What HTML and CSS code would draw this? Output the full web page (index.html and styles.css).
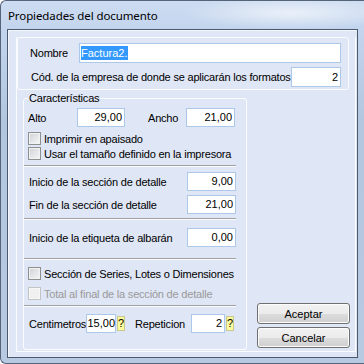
FILE: index.html
```html
<!DOCTYPE html>
<html lang="es">
<head>
    <meta charset="UTF-8">
    <title>Propiedades del documento</title>
    <link rel="stylesheet" href="styles.css">
</head>
<body>
    <div class="window">
        <div class="titlebar">Propiedades del documento</div>
        <div class="client">
            <div class="panel">
                <div class="headbox">
                    <div class="row">
                        <span class="lbl name-lbl">Nombre</span>
                        <span class="field name-field"><span class="sel">Factura2.</span></span>
                    </div>
                    <div class="row row-code">
                        <span class="lbl grow">Cód. de la empresa de donde se aplicarán los formatos</span>
                        <span class="field code-field">2</span>
                    </div>
                </div>
                <div class="lower">
                    <fieldset class="group">
                        <legend>Características</legend>
                        <div class="row row-size">
                            <span class="lbl alto-lbl">Alto</span>
                            <span class="field size-field">29,00</span>
                            <span class="lbl ancho-lbl">Ancho</span>
                            <span class="field size-field ancho">21,00</span>
                        </div>
                        <div class="check first"><span class="box"></span>Imprimir en apaisado</div>
                        <div class="check"><span class="box"></span>Usar el tamaño definido en la impresora</div>
                        <div class="sep"></div>
                        <div class="row detail first-detail">
                            <span class="lbl grow">Inicio de la sección de detalle</span>
                            <span class="field det-field">9,00</span>
                        </div>
                        <div class="row detail fin">
                            <span class="lbl grow">Fin de la sección de detalle</span>
                            <span class="field det-field">21,00</span>
                        </div>
                        <div class="sep"></div>
                        <div class="row detail label-row">
                            <span class="lbl grow">Inicio de la etiqueta de albarán</span>
                            <span class="field det-field">0,00</span>
                        </div>
                        <div class="sep sep-wide"></div>
                        <div class="check series"><span class="box"></span>Sección de Series, Lotes o Dimensiones</div>
                        <div class="check disabled"><span class="box"></span>Total al final de la sección de detalle</div>
                        <div class="sep"></div>
                        <div class="row row-repeat">
                            <span class="lbl cm-lbl">Centimetros</span>
                            <span class="field cm-field">15,00</span>
                            <span class="help">?</span>
                            <span class="lbl rep-lbl">Repeticion</span>
                            <span class="field rep-field">2</span>
                            <span class="help">?</span>
                        </div>
                    </fieldset>
                    <div class="buttons">
                        <button class="btn">Aceptar</button>
                        <button class="btn">Cancelar</button>
                    </div>
                </div>
            </div>
        </div>
    </div>
</body>
</html>
```

FILE: styles.css
```css
body {
    margin: 0;
    font-family: "Liberation Sans", Arial, sans-serif;
    font-size: 11px;
    color: #000;
}

.window {
    width: 364px;
    height: 364px;
    box-sizing: border-box;
    border: 1px solid #56647a;
    border-right: 0;
    border-radius: 6px 0 0 6px;
    background:
        radial-gradient(ellipse 110px 16px at 290px 12px, rgba(255,255,255,0.6), rgba(255,255,255,0) 100%),
        linear-gradient(180deg, #cddcf1 0, #c3d5ee 28px, #b3c6e0 120px, #b8cae2 100%);
    display: flex;
    flex-direction: column;
    overflow: hidden;
}

.titlebar {
    height: 28px;
    padding-left: 7px;
    display: flex;
    align-items: center;
    font-family: "Noto Sans", "Open Sans", sans-serif;
    font-size: 11.5px;
    letter-spacing: -0.1px;
    color: #000;
}

.client {
    margin-left: 6px;
    width: 351px;
    height: 329px;
    box-sizing: border-box;
    border: 1px solid #4b596c;
    background: #dfe6f5;
    box-shadow: inset 1px 1px 0 #f4f7fd;
    display: flex;
    flex-direction: column;
}

.panel {
    margin: 7px 1px 5px 8px;
    flex: 1;
    border: 1px solid #fbfcff;
    border-top: 0;
    display: flex;
    flex-direction: column;
}

.headbox {
    width: 332px;
    height: 53px;
    box-sizing: border-box;
    border: 1px solid #fbfcff;
    border-radius: 3px;
    padding: 5px 7px 0 12px;
}

.row {
    display: flex;
    align-items: center;
}

.lbl {
    white-space: nowrap;
    letter-spacing: -0.2px;
}

.grow {
    flex: 1;
}

.field {
    height: 19px;
    box-sizing: border-box;
    background: #fff;
    border: 1px solid #abc7e9;
    line-height: 17px;
    text-align: right;
    padding-right: 2px;
    white-space: nowrap;
}

.name-lbl {
    width: 49px;
}

.name-field {
    flex: 1;
    height: 20px;
    text-align: left;
    padding: 2px 0 0 1px;
    line-height: 14px;
}

.sel {
    background: #3399ff;
    color: #fff;
    display: inline-block;
    padding-right: 1px;
}

.row-code {
    margin-top: 4px;
}

.code-field {
    width: 50px;
    height: 20px;
    line-height: 18px;
}

.lower {
    flex: 1;
    display: flex;
}

.group {
    margin: 2px 0 1px 6px;
    width: 224px;
    box-sizing: border-box;
    border: 1px solid #fbfcff;
    border-radius: 3px;
    padding: 3px 10px 0 4px;
    min-width: 0;
}

.group legend {
    padding: 0 1px;
    margin-left: 0;
    line-height: 13px;
    letter-spacing: -0.2px;
}

.alto-lbl {
    width: 49px;
}

.size-field {
    width: 48px;
}

.ancho-lbl {
    margin-left: 23px;
    width: 38px;
}

.size-field.ancho {
    width: 49px;
}

.check {
    height: 15px;
    display: flex;
    align-items: center;
    white-space: nowrap;
    letter-spacing: -0.2px;
}

.check.first {
    margin-top: 4px;
}

.box {
    width: 13px;
    height: 13px;
    box-sizing: border-box;
    margin-right: 3px;
    border: 1px solid #8e8f8f;
    background: linear-gradient(135deg, #cfd2d8, #f7f7f7);
    box-shadow: inset 0 0 0 1px #f2f2f2;
    flex: none;
}

.check.disabled {
    color: #9a9a9a;
    margin-top: 5px;
}

.check.disabled .box {
    border-color: #c2c4c6;
    background: #f0f0f0;
    box-shadow: inset 0 0 0 1px #f7f7f7;
}

.sep {
    margin: 4px 0 0 -4px;
    width: 212px;
    border-top: 1px solid #a0a0a0;
    border-bottom: 1px solid #fbfcff;
}

.detail.first-detail {
    margin-top: 5px;
}

.detail.fin {
    margin-top: 4px;
}

.detail.label-row {
    margin-top: 8px;
}

.sep-wide {
    margin-top: 11px;
}

.check.series {
    margin-top: 6px;
}

.det-field {
    width: 49px;
}

.lbl.grow {
    padding-left: 1px;
}

.row-repeat {
    margin-top: 7px;
}

.cm-lbl {
    width: 57px;
    padding-left: 1px;
}

.cm-field {
    width: 30px;
    padding-right: 0;
}

.help {
    width: 8px;
    height: 15px;
    box-sizing: border-box;
    margin-left: 1px;
    background: #fbfb9c;
    border: 1px solid #c9c98e;
    font-size: 11px;
    line-height: 13px;
    text-align: center;
    overflow: hidden;
}

.rep-lbl {
    margin-left: 10px;
    width: 56px;
}

.rep-field {
    width: 34px;
}

.buttons {
    margin-left: 10px;
    padding-bottom: 3px;
    display: flex;
    flex-direction: column;
    justify-content: flex-end;
    gap: 3px;
}

.btn {
    width: 93px;
    height: 21px;
    margin: 0;
    padding: 0;
    border: 1px solid #707070;
    border-radius: 3px;
    background: linear-gradient(180deg, #f2f2f2 0, #ebebeb 50%, #dddddd 51%, #cfcfcf 100%);
    box-shadow: inset 0 0 0 1px #fcfcfc;
    font-family: "Liberation Sans", Arial, sans-serif;
    font-size: 11px;
    color: #000;
}
```
